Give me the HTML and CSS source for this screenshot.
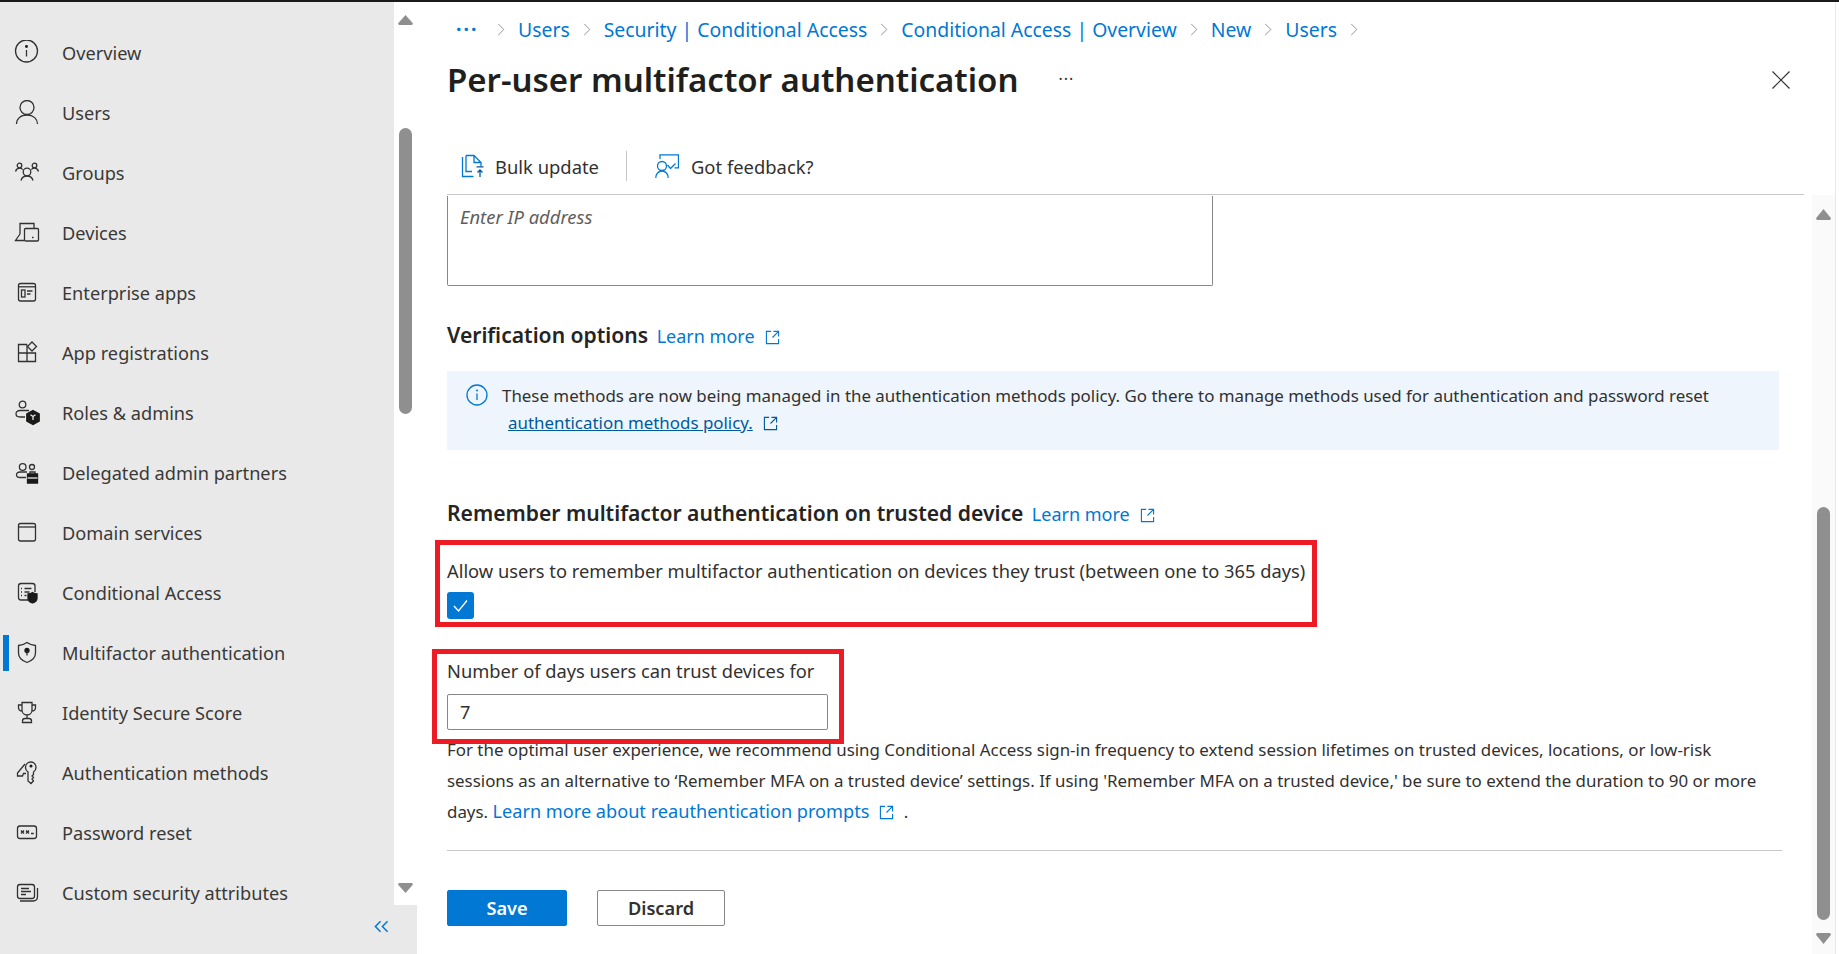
FILE: index.html
```html
<!DOCTYPE html>
<html lang="en">
<head>
<meta charset="utf-8">
<title>Per-user multifactor authentication</title>
<link rel="stylesheet" href="styles.css">
</head>
<body>
<div class="topbar"></div>
<div class="app">
  <aside class="sidebar">
    <div class="side-top">
      <nav class="nav">
        <a class="nav-item"><svg class="nav-icon" viewBox="0 0 26 26"><circle cx="12.5" cy="11" r="11"/><path d="M12.5 10v6.500"/><circle class="solid" cx="12.500" cy="6.500" r=".8"/></svg><span>Overview</span></a>
        <a class="nav-item"><svg class="nav-icon" viewBox="0 0 26 26"><circle cx="13" cy="7.500" r="7"/><path d="M2.500 24c0-5 4-9 10.500-9s10.500 4 10.500 9"/></svg><span>Users</span></a>
        <a class="nav-item"><svg class="nav-icon" viewBox="0 0 26 26"><circle cx="13" cy="12" r="3.800"/><path d="M7 20.500c.8-3 3-4.500 6-4.500s5.200 1.500 6 4.500"/><circle cx="5.500" cy="5.500" r="2.300"/><circle cx="20.500" cy="5.500" r="2.300"/><path d="M1.500 11.500c.6-2 2-3.300 4-3.300 1.300 0 2.500.5 3.200 1.500M24.500 11.500c-.6-2-2-3.300-4-3.300-1.300 0-2.500.5-3.200 1.500"/></svg><span>Groups</span></a>
        <a class="nav-item"><svg class="nav-icon" viewBox="0 0 26 26"><path d="M6 14V3.500h14V8M6 14l-4.500 6.500H10"/><rect x="10.500" y="8.500" width="14" height="12.500" rx="1"/><path d="M18 17.500h1.500"/></svg><span>Devices</span></a>
        <a class="nav-item"><svg class="nav-icon" viewBox="0 0 26 26"><rect x="4.500" y="3.500" width="17" height="17.500" rx="2"/><path d="M4.500 6.800h17"/><rect x="7.500" y="10" width="3.500" height="7"/><path d="M13 11h5.500M13 14h3.500"/></svg><span>Enterprise apps</span></a>
        <a class="nav-item"><svg class="nav-icon" viewBox="0 0 26 26"><path d="M13 4.500H4.500v17h17V13H4.500M13 4.500v17"/><path d="M18 2l4.500 4.500L18 11l-4.500-4.500z"/></svg><span>App registrations</span></a>
        <a class="nav-item"><svg class="nav-icon" viewBox="0 0 26 26"><circle cx="8.500" cy="4.500" r="3.300"/><path d="M15 10.500H6c-2.500 0-4 1.300-4 3.300S3.500 17 6 17h5"/><path class="solid" d="M19 10.500l6.200 3.500v7l-6.200 3.500-6.200-3.500v-7z"/><path class="white" d="M16.500 14.800l2.500 1.700 2.500-1.700M19 16.500v3.500"/></svg><span>Roles &amp; admins</span></a>
        <a class="nav-item"><svg class="nav-icon" viewBox="0 0 26 26"><circle cx="8.700" cy="7" r="3.300"/><circle cx="18" cy="7" r="2.500"/><path d="M13 12H6c-2 0-3.500 1-3.500 2.700S4 17.500 6 17.500h6"/><path d="M16 14v-2h5v2"/><path class="solid" d="M13.500 14h10v9h-10z"/><path class="white" d="M13.500 18h10"/></svg><span>Delegated admin partners</span></a>
        <a class="nav-item"><svg class="nav-icon" viewBox="0 0 26 26"><rect x="4.500" y="3.500" width="17" height="17.500" rx="2"/><path d="M4.500 7h17"/></svg><span>Domain services</span></a>
        <a class="nav-item"><svg class="nav-icon" viewBox="0 0 26 26"><path d="M14 20H7c-1.500 0-2.500-1-2.500-2.500V6c0-1.500 1-2.500 2.500-2.500h11.500c1.500 0 2.500 1 2.500 2.500v6"/><path d="M7 8.500h1M10.500 8.500h7M7 12h1M10.500 12h5M7 15.500h1M10.500 15.500h2"/><path class="solid" d="M18.500 12.500c1.500 1 3 1.400 4.500 1.400v4c0 2.300-1.700 4.300-4.500 5.100-2.800-.8-4.500-2.800-4.500-5.100v-4c1.500 0 3-.4 4.500-1.400z"/></svg><span>Conditional Access</span></a>
        <a class="nav-item active"><svg class="nav-icon" viewBox="0 0 26 26"><path d="M13 2.500c2.500 1.800 5.200 2.800 8.500 3v7.500c0 4.200-3 7.600-8.500 9.500-5.500-1.900-8.500-5.300-8.500-9.500V5.500c3.300-.2 6-1.200 8.500-3z"/><circle class="solid" cx="13" cy="10.500" r="2"/><path d="M13 11v4.500"/></svg><span>Multifactor authentication</span></a>
        <a class="nav-item"><svg class="nav-icon" viewBox="0 0 26 26"><path d="M8 2.500h10v7.500c0 3-2.200 5-5 5s-5-2-5-5zM8 5H4.500v2.500c0 2 1.500 3.500 3.800 3.500M18 5h3.500v2.500c0 2-1.500 3.500-3.800 3.500M13 15v3M8.500 22.500v-1.500c0-1.500 1-2.500 2.500-2.500h4c1.500 0 2.500 1 2.500 2.500v1.500z"/></svg><span>Identity Secure Score</span></a>
        <a class="nav-item"><svg class="nav-icon" viewBox="0 0 26 26"><path d="M11 4L3.500 13v3h5l1-2.500h2.500"/><path d="M17 2c-3.500 0-5.500 2.500-5.500 5.500 0 2 1 3.500 2.500 4.500v9l3 2.500 2.500-2.500-1.500-2 1.500-1.500-1.500-1.500 1.500-1.500V12c1.500-1 2.500-2.500 2.500-4.500 0-3-2-5.500-5-5.500z"/><circle class="solid" cx="17" cy="6" r=".9"/></svg><span>Authentication methods</span></a>
        <a class="nav-item"><svg class="nav-icon" viewBox="0 0 26 26"><rect x="3.500" y="6" width="19" height="12.500" rx="2.500"/><path d="M7 10.500l3 3M10 10.500l-3 3M12 10.500l3 3M15 10.500l-3 3M17 13.500h2.800"/></svg><span>Password reset</span></a>
        <a class="nav-item"><svg class="nav-icon" viewBox="0 0 26 26"><rect x="3.500" y="4.500" width="17" height="14" rx="2.500"/><path d="M7 8.500h8M7 11.500h10M7 14.500h5"/><path d="M6 21h13c3 0 4.500-1.500 4.500-4.500V8"/></svg><span>Custom security attributes</span></a>
      </nav>
      <div class="side-scroll">
        <span class="tri up"></span>
        <span class="side-thumb"></span>
        <span class="tri down"></span>
      </div>
    </div>
    <div class="side-foot">
      <svg class="collapse" viewBox="0 0 16 13"><path d="M7 1L1.500 6.500 7 12M14.500 1L9 6.500l5.500 5.500"/></svg>
    </div>
  </aside>

  <main class="main">
    <header class="head">
      <div class="crumbs">
        <span class="crumb-more">···</span>
        <svg class="chev" viewBox="0 0 10 16"><path d="M1.500 1l7 7-7 7"/></svg>
        <a class="crumb users">Users</a>
        <svg class="chev" viewBox="0 0 10 16"><path d="M1.500 1l7 7-7 7"/></svg>
        <a class="crumb">Security | Conditional Access</a>
        <svg class="chev" viewBox="0 0 10 16"><path d="M1.500 1l7 7-7 7"/></svg>
        <a class="crumb">Conditional Access | Overview</a>
        <svg class="chev" viewBox="0 0 10 16"><path d="M1.500 1l7 7-7 7"/></svg>
        <a class="crumb">New</a>
        <svg class="chev" viewBox="0 0 10 16"><path d="M1.500 1l7 7-7 7"/></svg>
        <a class="crumb">Users</a>
        <svg class="chev" viewBox="0 0 10 16"><path d="M1.500 1l7 7-7 7"/></svg>
      </div>
      <div class="title-row">
        <h1>Per-user multifactor authentication</h1>
        <span class="title-more">···</span>
        <svg class="close" viewBox="0 0 18 18"><path d="M.5.5l17 17M17.500.5l-17 17"/></svg>
      </div>
      <div class="toolbar">
        <button class="tool">
          <svg class="tool-icon" viewBox="0 0 24 24"><path d="M1.500 3v19.500h11M5 1.500h8l7 7v4M5 1.500v16h6M13 1.500v7h7"/><path class="tool-dark" d="M19 23v-7M16.500 18.500L19 16l2.500 2.500M15.500 12.800h7"/></svg>
          <span>Bulk update</span>
        </button>
        <span class="tool-sep"></span>
        <button class="tool wide">
          <svg class="tool-icon" viewBox="0 0 24 24"><circle cx="7" cy="12" r="4.500"/><path d="M.8 24c0-4 2.500-7 6.200-7s6.200 3 6.200 7M5 5V.8h18.500v13h-4"/><path d="M12.500 11l3 3.500 5-5"/></svg>
          <span>Got feedback?</span>
        </button>
      </div>
    </header>
    <div class="body">
      <div class="content">
        <div class="ip-box">Enter IP address</div>

        <h2 class="section-title first">Verification options <a class="learn">Learn more<svg class="ext" viewBox="0 0 16 16"><path d="M6.500 1.500h-5v13h13v-5M9 1.500h5.500V7M14.500 1.500L8 8"/></svg></a></h2>

        <div class="notice">
          <svg class="notice-icon" viewBox="0 0 22 22"><circle cx="11" cy="11" r="10"/><path d="M11 9.500V16"/><circle class="blue-dot" cx="11" cy="6.500" r="1"/></svg>
          <div class="notice-text">
            <p>These methods are now being managed in the authentication methods policy. Go there to manage methods used for authentication and password reset</p>
            <p class="notice-link"><a>authentication methods policy.<svg class="ext dark" viewBox="0 0 16 16"><path d="M6.500 1.500h-5v13h13v-5M9 1.500h5.500V7M14.500 1.500L8 8"/></svg></a></p>
          </div>
        </div>

        <h2 class="section-title second">Remember multifactor authentication on trusted device <a class="learn">Learn more<svg class="ext" viewBox="0 0 16 16"><path d="M6.500 1.500h-5v13h13v-5M9 1.500h5.500V7M14.500 1.500L8 8"/></svg></a></h2>

        <div class="allow">
          <span class="mark mark-allow"></span>
          <div class="field-text">Allow users to remember multifactor authentication on devices they trust (between one to 365 days)</div>
          <span class="check"><svg viewBox="0 0 27 27"><path d="M7 14l4.500 5L20 8.500"/></svg></span>
        </div>

        <div class="days">
          <span class="mark mark-days"></span>
          <div class="field-text">Number of days users can trust devices for</div>
          <div class="days-input">7</div>
        </div>

        <p class="para">For the optimal user experience, we recommend using Conditional Access sign-in frequency to extend session lifetimes on trusted devices, locations, or low-risk<br>sessions as an alternative to ‘Remember MFA on a trusted device’ settings. If using 'Remember MFA on a trusted device,' be sure to extend the duration to 90 or more<br>days. <a class="learn-inline">Learn more about reauthentication prompts<svg class="ext" viewBox="0 0 16 16"><path d="M6.500 1.500h-5v13h13v-5M9 1.500h5.500V7M14.500 1.500L8 8"/></svg></a> <span class="para-end">.</span></p>

        <hr class="rule">

        <div class="actions">
          <button class="btn primary">Save</button>
          <button class="btn">Discard</button>
        </div>
      </div>
      <div class="main-scroll">
        <span class="tri up gray"></span>
        <span class="main-thumb"></span>
        <span class="tri down gray"></span>
      </div>
    </div>
  </main>
</div>
</body>
</html>
```
FILE: styles.css
```css
* { box-sizing: border-box; }
html, body { margin: 0; height: 100%; overflow: hidden; }
body {
  display: flex;
  flex-direction: column;
  background: #fff;
  color: #323130;
  font-family: "Noto Sans", "Open Sans", sans-serif;
  font-size: 18.2px;
}
.topbar { height: 2px; background: #1b1a19; flex: none; }
.app { flex: 1; display: flex; min-height: 0; }

/* sidebar */
.sidebar { width: 417px; flex: none; display: flex; flex-direction: column; background: #e9e9e9; }
.side-top { flex: 1; min-height: 0; display: flex; }
.nav { flex: 1; padding-top: 21px; overflow: hidden; }
.nav-item { position: relative; display: flex; align-items: center; height: 60px; padding-left: 14px; gap: 22px; color: #3a3938; }
.nav-item span { margin-top: -1px; }
.nav-item.active::before { content: ""; position: absolute; left: 3px; top: 12px; width: 6px; height: 36px; background: #0078d4; }
.nav-icon { width: 26px; height: 26px; flex: none; fill: none; stroke: #323130; stroke-width: 1.3; }
.nav-icon .solid { fill: #1b1a19; stroke: #1b1a19; }
.nav-icon .white { fill: none; stroke: #e9e9e9; }
.side-scroll { width: 23px; background: #fff; display: flex; flex-direction: column; align-items: center; padding-top: 13px; }
.side-thumb { width: 13px; height: 286px; margin-top: 103px; border-radius: 7px; background: #8f8f8f; }
.side-scroll .down { margin-top: auto; margin-bottom: 12px; }
.tri { width: 15px; height: 10px; background: #8f8f8f; flex: none; }
.tri.up { clip-path: polygon(50% 0, 100% 85%, 94% 100%, 6% 100%, 0 85%); }
.tri.down { clip-path: polygon(6% 0, 94% 0, 100% 15%, 50% 100%, 0 15%); }
.side-foot { height: 49px; flex: none; display: flex; justify-content: flex-end; align-items: center; padding: 0 28px 6px 0; }
.collapse { width: 15px; height: 13px; fill: none; stroke: #0078d4; stroke-width: 1.6; }

/* main */
.main { flex: 1; min-width: 0; display: flex; flex-direction: column; padding-left: 30px; border-right: 1px solid #e8e8e8; margin-right: 3px; }
.head { flex: none; margin-right: 31px; border-bottom: 1px solid #c8c8c8; height: 193px; }
.crumbs { display: flex; align-items: center; height: 32px; margin-top: 11px; padding-left: 9px; gap: 13px; color: #0078d4; font-size: 19.4px; }
.crumb { color: #0078d4; white-space: nowrap; }
.crumb-more { width: 28px; letter-spacing: 2px; font-weight: 700; line-height: 1; }
.chev { width: 8px; height: 17px; fill: none; stroke: #7a7a7a; stroke-width: 1; flex: none; }
.title-row { display: flex; align-items: center; height: 56px; margin-top: 6px; }
h1 { margin: 0; font-size: 33px; font-weight: 600; color: #201f1e; white-space: nowrap; }
.title-more { margin-left: 40px; letter-spacing: 1px; font-size: 16px; }
.close { width: 18px; height: 18px; margin-left: auto; margin-right: 14px; margin-top: 2px; fill: none; stroke: #323130; stroke-width: 1.2; }
.toolbar { display: flex; align-items: center; height: 44px; margin-top: 37px; padding-left: 14px; font-size: 18.4px; }
.tool { display: flex; align-items: center; gap: 10px; background: none; border: 0; padding: 0; font: inherit; color: #323130; }
.tool.wide { gap: 12px; }
.tool-icon { width: 24px; height: 24px; fill: none; stroke: #0078d4; stroke-width: 1.3; }
.tool-icon .tool-dark { stroke: #005a9e; }
.tool-sep { width: 1px; height: 30px; background: #c8c8c8; margin: 0 28px 0 27px; }

.body { flex: 1; min-height: 0; display: flex; }
.content { flex: 1; min-width: 0; padding-right: 30px; }
.ip-box { height: 90px; width: 766px; border: 1px solid #8a8886; border-top: 0; border-radius: 0 0 2px 2px; padding: 7px 12px; font-size: 18.4px; font-style: italic; color: #605e5c; margin-top: 1px; line-height: 28px; }
.section-title { margin: 0; font-size: 21.1px; font-weight: 600; line-height: 30px; color: #252423; }
.section-title.first { margin-top: 34px; }
.section-title.second { margin-top: 48px; }
.learn { margin-left: 3px; font-size: 18px; font-weight: 400; color: #0078d4; }
.ext { width: 15px; height: 15px; margin-left: 10px; vertical-align: -2px; fill: none; stroke: #0078d4; stroke-width: 1.2; }
.ext.dark { stroke: #005a9e; }
.notice { display: flex; margin-top: 20px; height: 79px; width: 1332px; background: #eff5fd; padding-left: 19px; font-size: 16.9px; }
.notice-icon { width: 22px; height: 22px; margin-top: 13px; flex: none; fill: none; stroke: #0078d4; stroke-width: 1.3; }
.blue-dot { fill: #0078d4; stroke: none; }
.notice-text { margin-left: 14px; padding-top: 11px; }
.notice-text p { margin: 0; line-height: 27px; white-space: nowrap; }
.notice-link { padding-left: 6px; }
.notice-link a { color: #005a9e; text-decoration: underline; }
.allow, .days { position: relative; }
.allow { margin-top: 27px; }
.field-text { line-height: 30px; white-space: nowrap; font-size: 18.3px; }
.check { display: block; width: 27px; height: 27px; margin-top: 6px; border-radius: 3px; background: #0078d4; }
.check svg { display: block; width: 27px; height: 27px; fill: none; stroke: #fff; stroke-width: 1.4; }
.days { margin-top: 37px; }
.days-input { width: 381px; height: 36px; margin-top: 8px; border: 1px solid #8a8886; border-radius: 2px; padding: 0 12px; line-height: 34px; }
.mark { position: absolute; border: 5px solid #ed1c24; pointer-events: none; }
.mark-allow { left: -12px; top: -16px; width: 882px; height: 87px; }
.mark-days { left: -15px; top: -7px; width: 412px; height: 95px; }
.para { margin: 5px 0 0; line-height: 30.5px; white-space: nowrap; font-size: 16.9px; }
.learn-inline { color: #0078d4; font-size: 18.15px; }
.para-end { margin-left: 5px; }
.rule { height: 1px; border: 0; margin: 22px 0 0; width: 1335px; background: #c8c8c8; }
.actions { display: flex; gap: 30px; margin-top: 39px; }
.btn { height: 36px; width: 128px; border: 1px solid #8a8886; border-radius: 2px; background: #fff; font: inherit; font-weight: 600; color: #323130; padding: 0; }
.btn.primary { width: 120px; background: #0078d4; border-color: #0078d4; color: #fff; }
.main-scroll { width: 23px; flex: none; background: #fafafa; display: flex; flex-direction: column; align-items: center; padding-top: 14px; }
.tri.gray { width: 15px; height: 11px; }
.main-thumb { width: 13px; height: 413px; margin-top: 287px; border-radius: 7px; background: #8f8f8f; }
.main-scroll .down { margin-top: 13px; }
```
